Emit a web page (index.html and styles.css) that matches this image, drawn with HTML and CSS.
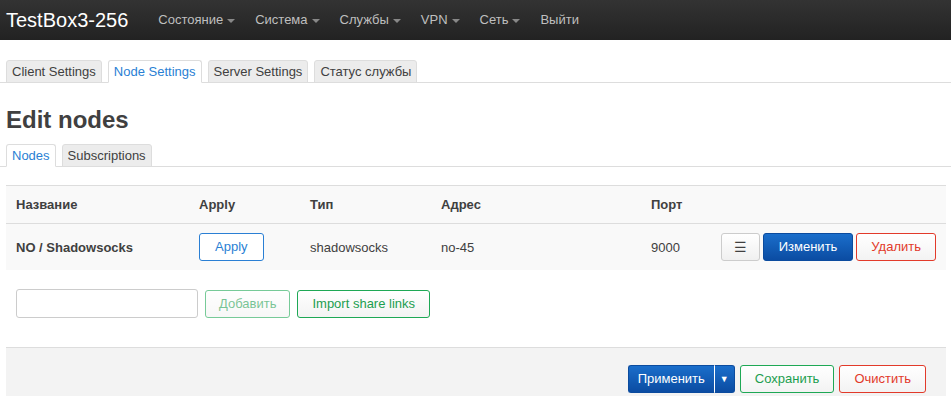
FILE: index.html
```html
<!DOCTYPE html>
<html lang="ru">
<head>
    <meta charset="UTF-8">
    <title>TestBox3-256 - Edit nodes</title>
    <link rel="stylesheet" href="styles.css">
</head>
<body>
    <header class="topbar">
        <a class="brand" href="#">TestBox3-256</a>
        <ul class="nav">
            <li><a href="#">Состояние<span class="caret"></span></a></li>
            <li><a href="#">Система<span class="caret"></span></a></li>
            <li><a href="#">Службы<span class="caret"></span></a></li>
            <li><a href="#">VPN<span class="caret"></span></a></li>
            <li><a href="#">Сеть<span class="caret"></span></a></li>
            <li><a href="#">Выйти</a></li>
        </ul>
    </header>

    <div class="main">
        <ul class="tabs page-tabs">
            <li><a href="#">Client Settings</a></li>
            <li class="active"><a href="#">Node Settings</a></li>
            <li><a href="#">Server Settings</a></li>
            <li><a href="#">Статус службы</a></li>
        </ul>

        <h2 class="title">Edit nodes</h2>

        <ul class="tabs sub-tabs">
            <li class="active"><a href="#">Nodes</a></li>
            <li><a href="#">Subscriptions</a></li>
        </ul>

        <table class="table">
            <thead>
                <tr>
                    <th class="c-name">Название</th>
                    <th class="c-apply">Apply</th>
                    <th class="c-type">Тип</th>
                    <th class="c-addr">Адрес</th>
                    <th class="c-port">Порт</th>
                    <th class="c-actions"></th>
                </tr>
            </thead>
            <tbody>
                <tr>
                    <td class="c-name"><strong>NO / Shadowsocks</strong></td>
                    <td class="c-apply"><button class="btn btn-outline-blue">Apply</button></td>
                    <td class="c-type">shadowsocks</td>
                    <td class="c-addr">no-45</td>
                    <td class="c-port">9000</td>
                    <td class="c-actions">
                        <div class="actions">
                            <button class="btn btn-default btn-drag">&#9776;</button>
                            <button class="btn btn-primary">Изменить</button>
                            <button class="btn btn-negative">Удалить</button>
                        </div>
                    </td>
                </tr>
            </tbody>
        </table>

        <div class="add-row">
            <input type="text" class="text-input">
            <button class="btn btn-positive btn-disabled">Добавить</button>
            <button class="btn btn-positive">Import share links</button>
        </div>

        <div class="page-actions">
            <div class="btn-group">
                <button class="btn btn-primary btn-apply">Применить</button>
                <button class="btn btn-primary btn-split">&#9660;</button>
            </div>
            <button class="btn btn-positive">Сохранить</button>
            <button class="btn btn-negative">Очистить</button>
        </div>
    </div>
</body>
</html>
```

FILE: styles.css
```css
body {
    margin: 0;
    background-color: #fff;
    font-family: 'Liberation Sans', Arial, sans-serif;
    font-size: 13px;
    color: #404040;
}

a {
    text-decoration: none;
}

/* top navigation */
.topbar {
    display: flex;
    align-items: center;
    height: 40px;
    background: linear-gradient(#333, #222);
}

.brand {
    padding-left: 6px;
    margin-right: 20px;
    font-size: 20px;
    color: #fff;
}

.nav {
    display: flex;
    margin: 0;
    padding: 0;
    list-style: none;
}

.nav a {
    display: block;
    padding: 0 10px;
    line-height: 40px;
    color: #bfbfbf;
}

.caret {
    display: inline-block;
    margin-left: 4px;
    vertical-align: middle;
    border-top: 4px solid #888;
    border-left: 4px solid transparent;
    border-right: 4px solid transparent;
}

/* page body */
.main {
    padding: 20px 5px 0 6px;
}

.tabs {
    display: flex;
    gap: 6px;
    margin: 0 -5px 0 -6px;
    padding: 0 0 0 6px;
    list-style: none;
    border-bottom: 1px solid #ddd;
}

.tabs li {
    margin-bottom: -1px;
}

.tabs a {
    display: block;
    padding: 0 5px;
    line-height: 21px;
    color: #404040;
    background-color: #ececec;
    border: 1px solid #ddd;
    border-bottom-color: #ddd;
    border-radius: 3px 3px 0 0;
}

.tabs .active a {
    color: #2a7fd4;
    background-color: #fff;
    border-bottom-color: #fff;
}

.title {
    margin: 22px 0 9px;
    font-size: 24px;
    line-height: 30px;
    font-weight: bold;
    color: #404040;
}

.sub-tabs {
    margin-bottom: 18px;
}

/* table */
.table {
    width: 100%;
    table-layout: fixed;
    border-collapse: collapse;
    background-color: #f9f9f9;
    border-top: 1px solid #ddd;
}

.table th {
    height: 37px;
    padding: 0 10px;
    text-align: left;
    font-weight: bold;
    border-bottom: 1px solid #ddd;
}

.table td {
    height: 46px;
    padding: 0 10px;
    vertical-align: middle;
}

.c-name { width: 163px; }
.c-apply { width: 91px; }
.c-type { width: 111px; }
.c-addr { width: 190px; }
.c-port { width: 50px; }

.actions {
    display: flex;
    gap: 3px;
}

/* buttons */
.btn {
    height: 28px;
    padding: 0 14px;
    font-family: inherit;
    font-size: 13px;
    line-height: 26px;
    border: 1px solid #ccc;
    border-radius: 3px;
    background: linear-gradient(#fff, #f0f0f0);
    color: #404040;
    cursor: pointer;
}

.btn-outline-blue {
    color: #2a7fd4;
    border-color: #2a7fd4;
    background: #fff;
    padding: 0 15px;
}

.btn-default {
    border-color: #ccc;
}

.btn-drag {
    width: 41px;
    padding: 0;
    font-size: 14px;
}

.btn-primary {
    color: #fff;
    border-color: #0b4b9e;
    background: linear-gradient(#1a6ecb, #0b4ca2);
    padding: 0 15px;
}

.btn-negative {
    color: #e23a2a;
    border-color: #e23a2a;
    background: linear-gradient(#fff, #f3f3f3);
    padding: 0 14px;
}

.btn-positive {
    color: #1c9e4f;
    border-color: #1ea855;
    background: linear-gradient(#fff, #f3f3f3);
}

.btn-disabled {
    opacity: 0.6;
}

.add-row {
    display: flex;
    align-items: center;
    gap: 7px;
    margin: 19px 0 0 10px;
}

.add-row .btn-disabled {
    padding: 0 13px;
}

.text-input {
    width: 182px;
    height: 29px;
    box-sizing: border-box;
    border: 1px solid #ccc;
    border-radius: 3px;
    background: #fff;
}

/* bottom bar */
.page-actions {
    display: flex;
    justify-content: flex-end;
    gap: 5px;
    margin-top: 29px;
    padding: 17px 20px 20px;
    background-color: #f3f3f3;
    border-top: 1px solid #ddd;
}

.btn-group {
    display: flex;
}

.btn-apply {
    padding: 0 9px;
    border-radius: 3px 0 0 3px;
    border-right: 1px solid #fff;
}

.btn-split {
    width: 20px;
    padding: 0;
    font-size: 9px;
    border-left: 0;
    border-radius: 0 3px 3px 0;
}
```
